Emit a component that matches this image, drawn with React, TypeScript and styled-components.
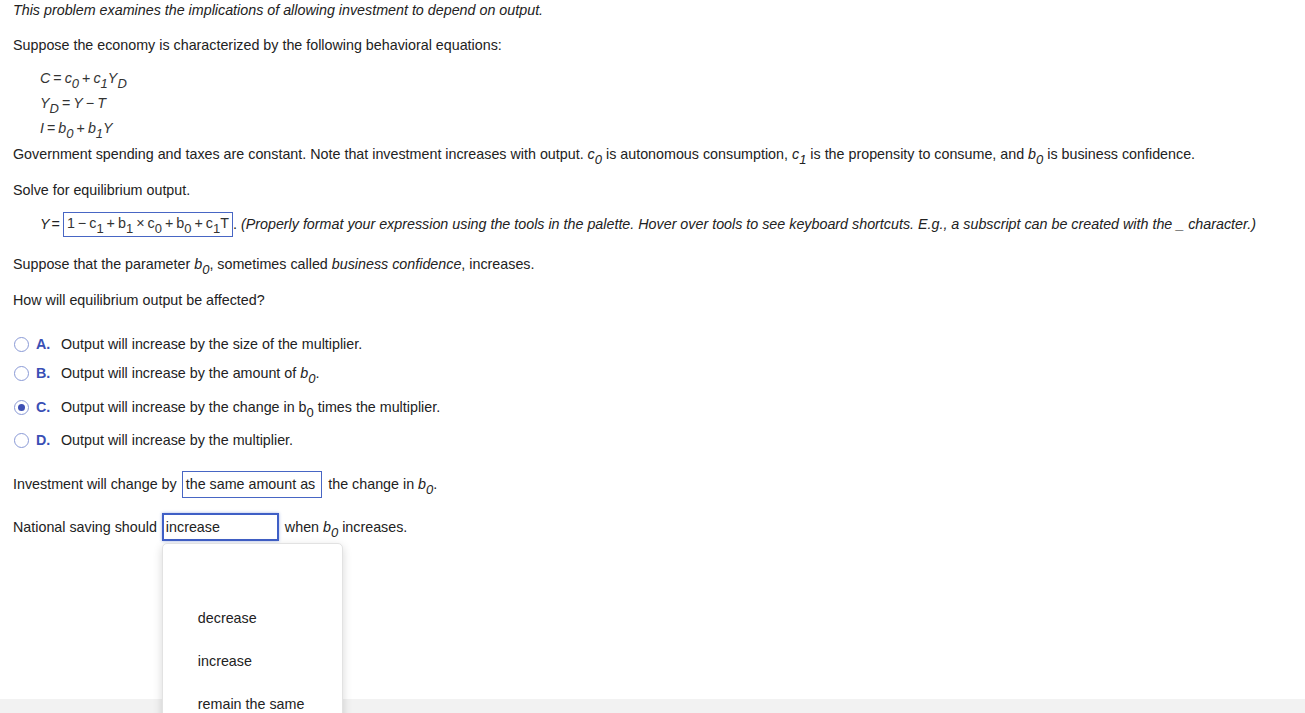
import styled, { createGlobalStyle } from "styled-components";

const GlobalStyle = createGlobalStyle`
  html, body {
    margin: 0;
    padding: 0;
    height: 100%;
    overflow: hidden;
    background: #ffffff;
  }
  body {
    font-family: "Liberation Sans", Arial, sans-serif;
    font-size: 14.3px;
    color: #222222;
  }
`;

const Page = styled.div`
  height: 100vh;
  display: flex;
  flex-direction: column;
`;

const Main = styled.main`
  flex: 1;
  padding: 2px 13px 0 13px;
  position: relative;
`;

const Footer = styled.footer`
  height: 14px;
  background: #f2f2f2;
`;

const Para = styled.p<{ $space: number; $italic?: boolean }>`
  margin: ${(p) => p.$space}px 0 0 0;
  line-height: 16px;
  font-style: ${(p) => (p.$italic ? "italic" : "normal")};
`;

const Equations = styled.div`
  margin: 13px 0 0 27px;
  display: flex;
  flex-direction: column;
`;

const EqLine = styled.div`
  height: 25px;
  line-height: 24px;
  font-style: italic;
  color: #333333;
`;

const Var = styled.i`
  font-style: italic;
`;

const Sub = styled.sub`
  font-size: 13px;
  vertical-align: -5px;
  line-height: 0;
  font-style: inherit;
`;

const Op = styled.span`
  font-style: normal;
  margin: 0 3px;
`;

const AnswerRow = styled.div`
  margin: 13px 0 0 27px;
  display: flex;
  align-items: center;
  height: 26px;
  line-height: 16px;
`;

const MathBox = styled.span`
  display: inline-block;
  box-sizing: border-box;
  height: 25px;
  line-height: 21px;
  border: 1px solid #4866c4;
  padding: 0 3px;
  margin-left: 3px;
  color: #333333;
`;

const Hint = styled.span`
  font-style: italic;
  margin-left: 4px;
`;

const Options = styled.div`
  margin-top: 22px;
  display: flex;
  flex-direction: column;
`;

const OptionRow = styled.label<{ $space: number }>`
  display: flex;
  align-items: center;
  height: 28px;
  margin-top: ${(p) => p.$space}px;
`;

const Radio = styled.span<{ $checked?: boolean }>`
  width: 15px;
  height: 15px;
  box-sizing: border-box;
  border-radius: 50%;
  border: 1.5px solid #8a9ad6;
  margin: 0 7px 0 1px;
  display: flex;
  align-items: center;
  justify-content: center;
  &::after {
    content: "";
    width: 7px;
    height: 7px;
    border-radius: 50%;
    background: ${(p) => (p.$checked ? "#3e50b4" : "transparent")};
  }
`;

const Letter = styled.span`
  color: #3a4fb5;
  font-weight: bold;
  width: 25px;
`;

const Sentence = styled.div<{ $space: number }>`
  margin-top: ${(p) => p.$space}px;
  display: flex;
  align-items: center;
  height: 28px;
  white-space: pre;
  position: relative;
`;

const ChoiceBox = styled.span`
  display: inline-flex;
  align-items: center;
  box-sizing: border-box;
  height: 27px;
  border: 1px solid #4866c4;
  padding: 0 6px 0 3px;
  margin: 0 6px 0 5px;
`;

const SelectBox = styled.span`
  display: inline-flex;
  align-items: center;
  box-sizing: border-box;
  width: 117px;
  height: 28px;
  border: 2px solid #3f5fc6;
  box-shadow: 0 0 3px rgba(63, 95, 198, 0.45);
  padding: 0 2px;
  margin: 0 6px 0 5px;
`;

const SelectWrap = styled.span`
  position: relative;
  display: inline-flex;
`;

const Menu = styled.ul`
  position: absolute;
  top: 30px;
  left: 5px;
  width: 181px;
  height: 200px;
  box-sizing: border-box;
  margin: 0;
  padding: 53px 0 0 0;
  list-style: none;
  background: #ffffff;
  border: 1px solid #e2e2e2;
  border-radius: 5px;
  box-shadow: 0 3px 10px rgba(0, 0, 0, 0.16);
  z-index: 10;
`;

const MenuItem = styled.li`
  height: 43px;
  line-height: 43px;
  padding-left: 35px;
  color: #222222;
`;

const b0 = (
  <Var>
    b<Sub>0</Sub>
  </Var>
);

export default function App() {
  return (
    <Page>
      <GlobalStyle />
      <Main>
        <Para $space={0} $italic>
          This problem examines the implications of allowing investment to depend on output.
        </Para>
        <Para $space={19}>
          Suppose the economy is characterized by the following behavioral equations:
        </Para>
        <Equations>
          <EqLine>
            C<Op>=</Op>c<Sub>0</Sub>
            <Op>+</Op>c<Sub>1</Sub>Y<Sub>D</Sub>
          </EqLine>
          <EqLine>
            Y<Sub>D</Sub>
            <Op>=</Op>Y<Op>−</Op>T
          </EqLine>
          <EqLine>
            I<Op>=</Op>b<Sub>0</Sub>
            <Op>+</Op>b<Sub>1</Sub>Y
          </EqLine>
        </Equations>
        <Para $space={5}>
          Government spending and taxes are constant. Note that investment increases with output.{" "}
          <Var>
            c<Sub>0</Sub>
          </Var>{" "}
          is autonomous consumption,{" "}
          <Var>
            c<Sub>1</Sub>
          </Var>{" "}
          is the propensity to consume, and {b0} is business confidence.
        </Para>
        <Para $space={20}>Solve for equilibrium output.</Para>
        <AnswerRow>
          <Var>Y</Var>
          <span style={{ marginLeft: 2 }}>=</span>
          <MathBox>
            1<Op>−</Op>c<Sub>1</Sub>
            <Op>+</Op>b<Sub>1</Sub>
            <Op>×</Op>c<Sub>0</Sub>
            <Op>+</Op>b<Sub>0</Sub>
            <Op>+</Op>c<Sub>1</Sub>T
          </MathBox>
          <span>.</span>
          <Hint>
            (Properly format your expression using the tools in the palette. Hover over tools to see
            keyboard shortcuts. E.g., a subscript can be created with the _ character.)
          </Hint>
        </AnswerRow>
        <Para $space={19}>
          Suppose that the parameter {b0}, sometimes called <i>business confidence</i>, increases.
        </Para>
        <Para $space={20}>How will equilibrium output be affected?</Para>
        <Options>
          <OptionRow $space={0}>
            <Radio />
            <Letter>A.</Letter>
            Output will increase by the size of the multiplier.
          </OptionRow>
          <OptionRow $space={1}>
            <Radio />
            <Letter>B.</Letter>
            <span>Output will increase by the amount of {b0}.</span>
          </OptionRow>
          <OptionRow $space={6}>
            <Radio $checked />
            <Letter>C.</Letter>
            <span>
              Output will increase by the change in b<Sub>0</Sub> times the multiplier.
            </span>
          </OptionRow>
          <OptionRow $space={5}>
            <Radio />
            <Letter>D.</Letter>
            Output will increase by the multiplier.
          </OptionRow>
        </Options>
        <Sentence $space={16}>
          Investment will change by
          <ChoiceBox>the same amount as</ChoiceBox>
          the change in {b0}.
        </Sentence>
        <Sentence $space={15}>
          National saving should
          <SelectWrap>
            <SelectBox>increase</SelectBox>
            <Menu>
              <MenuItem>decrease</MenuItem>
              <MenuItem>increase</MenuItem>
              <MenuItem>remain the same</MenuItem>
            </Menu>
          </SelectWrap>
          when {b0} increases.
        </Sentence>
      </Main>
      <Footer />
    </Page>
  );
}
